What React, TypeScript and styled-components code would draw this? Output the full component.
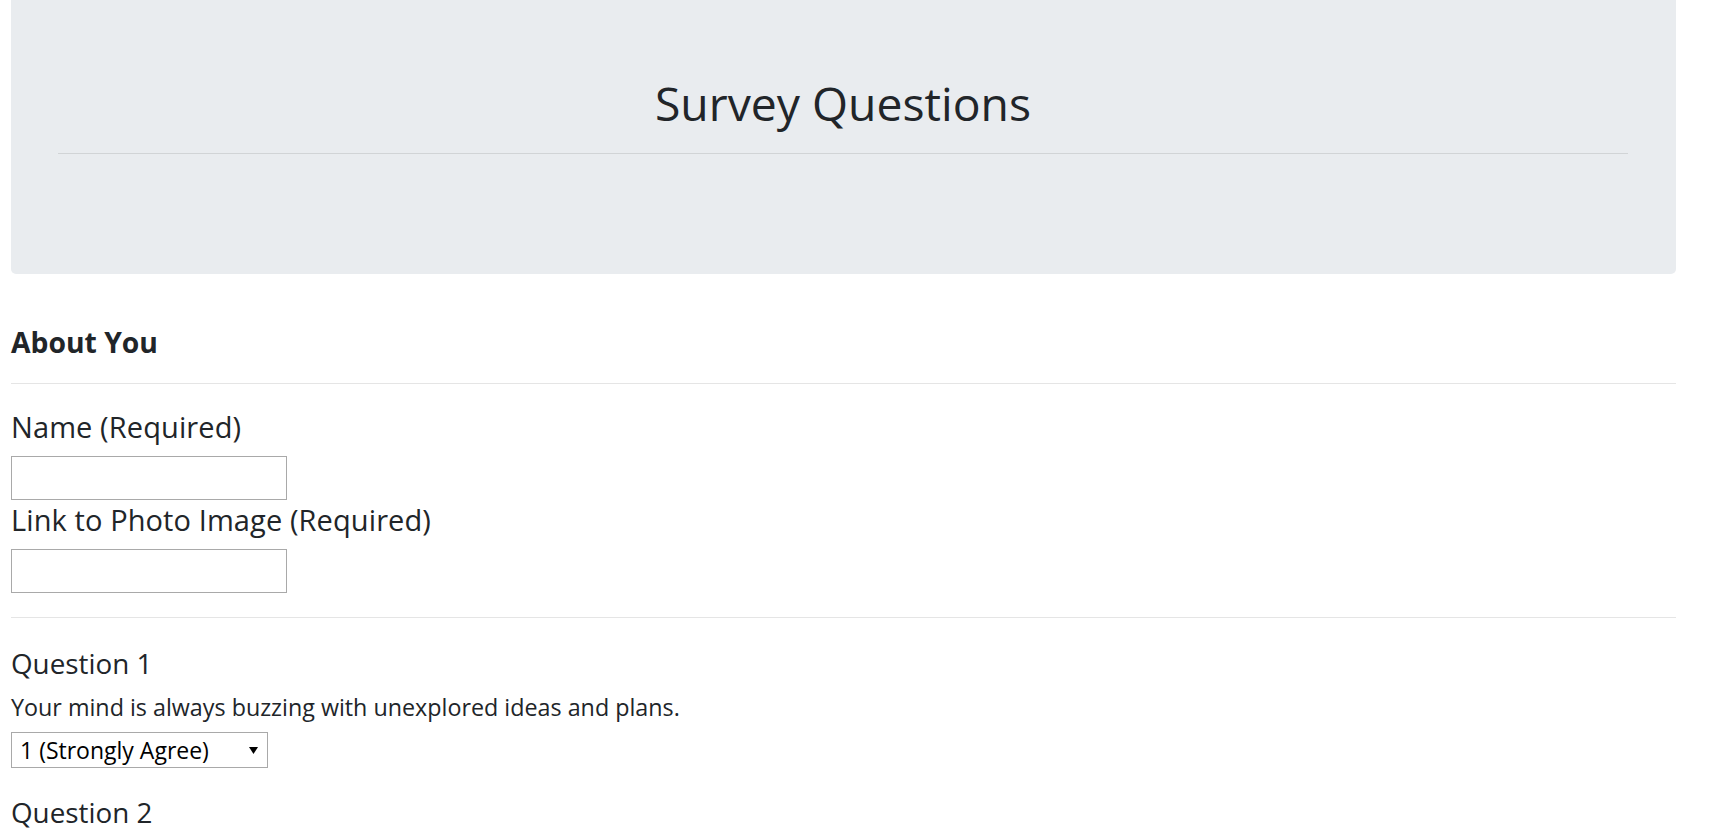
import React from "react";
import styled, { createGlobalStyle } from "styled-components";

const GlobalStyle = createGlobalStyle`
  html, body { margin: 0; padding: 0; background: #fff; }
  body {
    font-family: "Open Sans", "Noto Sans", sans-serif;
    color: #212529;
  }
  * { box-sizing: border-box; }
`;

const Page = styled.div`
  padding: 0 42px 40px 11px;
`;

const Jumbotron = styled.header`
  background: #e9ecef;
  border-radius: 0 0 5px 5px;
  height: 274px;
  padding: 74px 48px 0 47px;
`;

const Title = styled.h1`
  margin: 0;
  font-size: 46.3px;
  line-height: 60px;
  font-weight: 400;
  text-align: center;
`;

const Rule = styled.hr<{ $top: number }>`
  margin: ${(p) => p.$top}px 0 0 0;
  border: 0;
  border-top: 1px solid rgba(0, 0, 0, 0.1);
  height: 0;
`;

const SectionTitle = styled.h3`
  margin: 50.3px 0 0 0;
  font-size: 28.3px;
  line-height: 36px;
  font-weight: 700;
`;

const FieldLabel = styled.label<{ $top: number }>`
  display: block;
  margin: ${(p) => p.$top}px 0 0 0;
  font-size: 29px;
  line-height: 36px;
  font-weight: 400;
  letter-spacing: 0.1px;
`;

const TextInput = styled.input`
  display: block;
  width: 276px;
  height: 44px;
  margin-top: 11.5px;
  border: 1px solid #a9a9a9;
  border-radius: 0;
  padding: 0 6px;
  font: inherit;
  font-size: 20px;
  background: #fff;
`;

const QuestionTitle = styled.h4<{ $top: number }>`
  margin: ${(p) => p.$top}px 0 0 0;
  font-size: 27.8px;
  line-height: 36px;
  font-weight: 400;
`;

const QuestionText = styled.p`
  margin: 11.5px 0 0 0;
  font-size: 23.3px;
  line-height: 30px;
`;

const SelectWrap = styled.div`
  position: relative;
  width: 257px;
  height: 36px;
  margin-top: 9.5px;
`;

const Select = styled.select`
  appearance: none;
  -webkit-appearance: none;
  width: 100%;
  height: 100%;
  border: 1px solid #a9a9a9;
  border-radius: 0;
  background: #fff;
  color: #000;
  padding: 0 0 0 8px;
  font-family: inherit;
  font-size: 23px;
`;

const Arrow = styled.svg`
  position: absolute;
  left: 238px;
  top: 15px;
  pointer-events: none;
`;

const options = [
  "1 (Strongly Agree)",
  "2",
  "3",
  "4",
  "5 (Strongly Disagree)",
];

const questions = [
  "Your mind is always buzzing with unexplored ideas and plans.",
  "You find it easy to introduce yourself to other people.",
  "You usually prefer to be around others rather than on your own.",
];

function Question({ index, text }: { index: number; text: string }) {
  return (
    <>
      <QuestionTitle $top={index === 0 ? 26.2 : 25.9}>Question {index + 1}</QuestionTitle>
      <QuestionText>{text}</QuestionText>
      <SelectWrap>
        <Select defaultValue={options[0]} aria-label={`Question ${index + 1}`}>
          {options.map((o) => (
            <option key={o}>{o}</option>
          ))}
        </Select>
        <Arrow width="9" height="7" viewBox="0 0 9 7">
          <path d="M0 0 H9 L4.5 7 Z" fill="#000" />
        </Arrow>
      </SelectWrap>
    </>
  );
}

export default function App() {
  return (
    <>
      <GlobalStyle />
      <Page>
        <Jumbotron>
          <Title>Survey Questions</Title>
          <Rule $top={19} />
        </Jumbotron>

        <SectionTitle>About You</SectionTitle>
        <Rule $top={22.7} />

        <FieldLabel $top={25} htmlFor="name">Name (Required)</FieldLabel>
        <TextInput id="name" type="text" />
        <FieldLabel $top={1.5} htmlFor="photo">Link to Photo Image (Required)</FieldLabel>
        <TextInput id="photo" type="text" />
        <Rule $top={24} />

        {questions.map((q, i) => (
          <Question key={i} index={i} text={q} />
        ))}
      </Page>
    </>
  );
}
